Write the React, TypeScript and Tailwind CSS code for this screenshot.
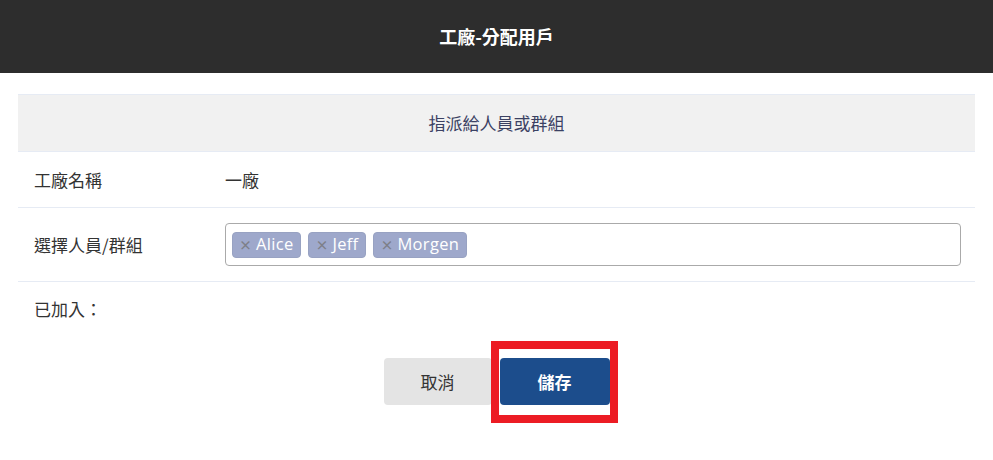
const FONT = { fontFamily: '"Noto Sans CJK TC", "Noto Sans", sans-serif' };

const TAGS = ["Alice", "Jeff", "Morgen"];

function Tag({ name }: { name: string }) {
  return (
    <span className="flex h-[26px] items-center gap-[4px] rounded-[4px] border border-[#98a2c2] bg-[#9ea8cb] pl-[6px] pr-[7px]">
      <span className="text-[13px] font-bold leading-none text-[#7d7f88]">×</span>
      <span
        className="text-[16.5px] font-medium leading-none tracking-[0.3px] text-white"
        style={{ fontFamily: '"Open Sans", "Noto Sans", sans-serif' }}
      >
        {name}
      </span>
    </span>
  );
}

export default function App() {
  return (
    <div className="h-[460px] w-[993px] bg-white" style={FONT}>
      <div className="flex h-[73px] items-center justify-center bg-[#2d2d2d]">
        <span className="text-[18px] font-bold text-white">工廠-分配用戶</span>
      </div>

      <div className="mx-[18px] mt-[21px]">
        <div className="flex h-[58px] items-center justify-center border-y border-[#e6ebf4] bg-[#f1f1f1] text-[17px] text-[#3b4163]">
          指派給人員或群組
        </div>

        <div className="flex h-[56px] items-center border-b border-[#e6ebf4] text-[17px] text-[#333]">
          <div className="w-[207px] pl-[16px]">工廠名稱</div>
          <div>一廠</div>
        </div>

        <div className="flex h-[74px] items-center border-b border-[#e6ebf4] text-[17px] text-[#333]">
          <div className="w-[207px] pl-[16px]">選擇人員/群組</div>
          <div className="flex h-[43px] w-[736px] items-center gap-[7px] rounded-[4px] border border-[#aaa] px-[6px]">
            {TAGS.map((t) => (
              <Tag key={t} name={t} />
            ))}
          </div>
        </div>

        <div className="flex h-[54px] items-center text-[17px] text-[#333]">
          <div className="pl-[16px]">已加入：</div>
        </div>

        <div className="mt-[22px] flex justify-center gap-[8px]">
          <button className="h-[47px] w-[108px] rounded-[4px] bg-[#e4e4e4] text-[17px] text-[#333]">取消</button>
          <div className="relative">
            <button className="h-[47px] w-[110px] rounded-[4px] bg-[#1c4d8c] text-[17px] font-bold text-white">儲存</button>
            <div className="pointer-events-none absolute -left-[9px] -right-[8px] -top-[17px] -bottom-[18px] border-[8px] border-[#ec1c24]" />
          </div>
        </div>
      </div>
    </div>
  );
}
